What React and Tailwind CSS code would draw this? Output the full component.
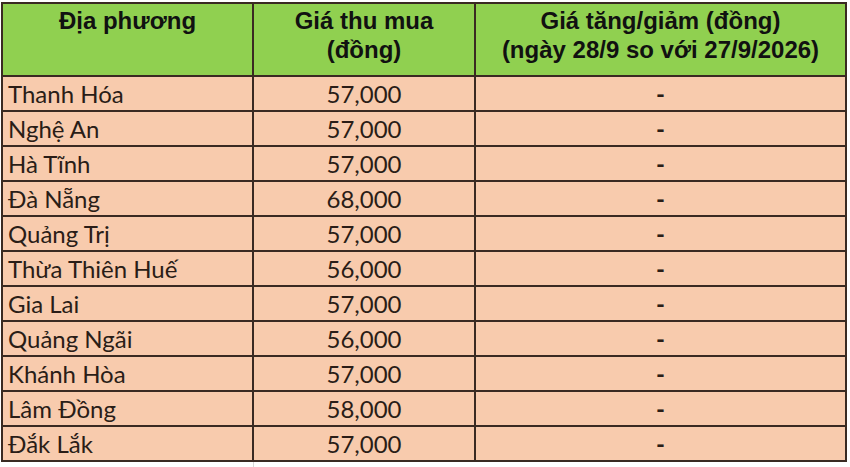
import React from 'react';

// Bảng giá thu mua heo hơi theo địa phương, kiểu bảng Excel chụp lại.
const rows = [
  ['Thanh Hóa', '57,000'],
  ['Nghệ An', '57,000'],
  ['Hà Tĩnh', '57,000'],
  ['Đà Nẵng', '68,000'],
  ['Quảng Trị', '57,000'],
  ['Thừa Thiên Huế', '56,000'],
  ['Gia Lai', '57,000'],
  ['Quảng Ngãi', '56,000'],
  ['Khánh Hòa', '57,000'],
  ['Lâm Đồng', '58,000'],
  ['Đắk Lắk', '57,000'],
];

const head = "font-['Liberation_Sans',Arial,sans-serif] font-bold text-[24px] leading-[29px] text-[#111] text-center pt-[2px]";
const body = "font-['Lato','Noto_Sans',sans-serif] text-[24px] leading-[33px] text-[#2a1d17] h-[35px] border-b-2 border-[#3a2a22]";

export default function App() {
  return (
    <div className="w-[850px] h-[467px] overflow-hidden bg-white">
      <div className="ml-[1px] mt-[2px] w-[846px] border-l-2 border-t-2 border-[#3a2a22] grid grid-cols-[251px_222px_371px]">
        <div className={`${head} h-[73px] bg-[#90d050] border-r-2 border-b-2 border-[#3a2a22]`}>Địa phương</div>
        <div className={`${head} h-[73px] bg-[#90d050] border-r-2 border-b-2 border-[#3a2a22]`}>
          Giá thu mua
          <br />
          (đồng)
        </div>
        <div className={`${head} h-[73px] bg-[#90d050] border-r-2 border-b-2 border-[#3a2a22]`}>
          Giá tăng/giảm (đồng)
          <br />
          (ngày 28/9 so với 27/9/2026)
        </div>
        {rows.map(([name, price]) => (
          <React.Fragment key={name}>
            <div className={`${body} bg-[#f8cbad] border-r-2 pl-[5px]`}>{name}</div>
            <div className={`${body} bg-[#f8cbad] border-r-2 text-center`}>{price}</div>
            <div className={`${body} bg-[#f8cbad] border-r-2 text-center font-bold`}>-</div>
          </React.Fragment>
        ))}
      </div>
      <div className="ml-[253px] w-px h-[10px] bg-[#d8d8d8]" />
    </div>
  );
}
